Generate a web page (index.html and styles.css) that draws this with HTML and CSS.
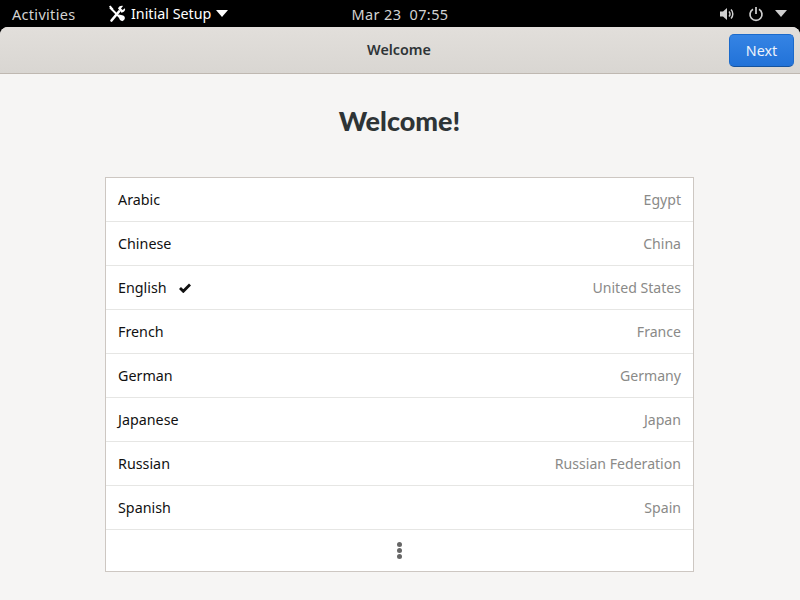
FILE: index.html
```html
<!DOCTYPE html>
<html lang="en">
<head>
<meta charset="utf-8">
<title>Welcome</title>
<link rel="stylesheet" href="styles.css">
</head>
<body>
<div class="topbar">
  <div class="topbar-left">
    <span class="activities">Activities</span>
    <span class="appmenu">
      <svg class="tools" width="18" height="18" viewBox="0 0 18 18"><path d="M2 2.500 15 15.500" fill="none" stroke="#fff" stroke-width="2"/><path d="M1 1.500 2.500.5l3 3.500L4 5.500z" fill="#fff"/><path d="M11 9.500l4.200 1a2.800 2.800 0 1 1-3.700 3.700z" fill="#fff"/><path d="M3.500 15.500 11 6.500" fill="none" stroke="#fff" stroke-width="2.600" stroke-linecap="round"/><path d="M10 3.500C11 1 13.500.5 15 1l-2 2.500 1.500 1.500L17 3.200c.5 1.800-.5 4-3.500 4.500z" fill="#fff"/></svg>
      <span>Initial Setup</span>
      <svg width="12" height="7" viewBox="0 0 12 7"><path d="M0 0h12L6 7z" fill="#fff"/></svg>
    </span>
  </div>
  <div class="clock"><span>Mar 23</span><span>07:55</span></div>
  <div class="topbar-right">
    <svg width="16" height="16" viewBox="0 0 16 16"><path d="M1 5.500h3L8 2v12L4 10.500H1z" fill="#cfcfcf"/><path d="M10 5.500a3.500 3.500 0 0 1 0 5M12 3.500a6.500 6.500 0 0 1 0 9" fill="none" stroke="#cfcfcf" stroke-width="1.500"/></svg>
    <svg class="power" width="16" height="16" viewBox="0 0 16 16"><path d="M5 3.200a6 6 0 1 0 6 0" fill="none" stroke="#cfcfcf" stroke-width="1.700"/><path d="M8 1v7" stroke="#cfcfcf" stroke-width="1.700"/></svg>
    <svg class="caret" width="12" height="7" viewBox="0 0 12 7"><path d="M0 0h12L6 7z" fill="#cfcfcf"/></svg>
  </div>
</div>
<div class="window">
  <header class="headerbar">
    <span></span>
    <h1 class="title">Welcome</h1>
    <div class="actions"><button class="next">Next</button></div>
  </header>
  <main class="content">
    <h2 class="heading">Welcome!</h2>
    <ul class="langs">
      <li class="row"><span>Arabic</span><span class="region">Egypt</span></li>
      <li class="row"><span>Chinese</span><span class="region">China</span></li>
      <li class="row"><span class="lang">English<svg class="check" width="12" height="10" viewBox="0 0 12 10"><path d="M1 5 4.300 8.300 11 1.500" fill="none" stroke="#111" stroke-width="2.800"/></svg></span><span class="region">United States</span></li>
      <li class="row"><span>French</span><span class="region">France</span></li>
      <li class="row"><span>German</span><span class="region">Germany</span></li>
      <li class="row"><span>Japanese</span><span class="region">Japan</span></li>
      <li class="row"><span>Russian</span><span class="region">Russian Federation</span></li>
      <li class="row"><span>Spanish</span><span class="region">Spain</span></li>
      <li class="more"><i></i><i></i><i></i></li>
    </ul>
  </main>
</div>
</body>
</html>
```
FILE: styles.css
```css
* { box-sizing: border-box; }
html, body { margin: 0; height: 100%; }
body {
  width: 800px; height: 600px; overflow: hidden; background: #000;
  display: flex; flex-direction: column;
  font-family: "Noto Sans", "Open Sans", sans-serif; font-size: 14.300px;
}
.topbar {
  height: 27px; flex: none; background: #000; color: #d3d3d3; font-size: 14.500px;
  display: grid; grid-template-columns: 1fr auto 1fr; align-items: center;
}
.topbar-left { display: flex; align-items: center; padding-left: 12px; }
.activities { width: 96px; letter-spacing: .3px; }
.appmenu { display: flex; align-items: center; gap: 5px; color: #fff; font-size: 14.300px; }
.clock { display: flex; gap: 8px; letter-spacing: .4px; }
.topbar-right { display: flex; justify-content: flex-end; align-items: center; padding-right: 13px; }
.power { margin-left: 13px; }
.caret { margin-left: 11px; }
.window {
  flex: 1; display: flex; flex-direction: column; background: #f6f5f4;
  border-radius: 8px 8px 0 0; overflow: hidden;
}
.headerbar {
  height: 47px; flex: none; display: grid; grid-template-columns: 1fr auto 1fr; align-items: center;
  background: linear-gradient(#e2dfdb, #d9d6d2); border-bottom: 1px solid #bfb8b1; padding: 0 6px 2px 4px;
}
.title { margin: 0; font-size: 14.300px; font-weight: 600; color: #2e3436; }
.actions { display: flex; justify-content: flex-end; margin-bottom: -2px; }
.next {
  width: 65px; height: 33px; padding: 0; font: inherit; color: #eef3fb;
  background: linear-gradient(#3584e4, #2272d8); border: 1px solid #1b6acb; border-bottom-color: #15539e; border-radius: 5px;
}
.content { flex: 1; display: flex; flex-direction: column; align-items: center; padding-right: 1px; }
.heading {
  margin: 27px 0 36px; font-family: Lato, sans-serif; font-weight: 900; font-size: 27px; line-height: 40px; color: #2e3436;
}
.langs {
  width: 589px; margin: 0; padding: 0; list-style: none; background: #fff;
  border: 1px solid #cdc7c2;
}
.row {
  height: 44px; display: flex; justify-content: space-between; align-items: center;
  padding: 0 12px; border-bottom: 1px solid #e6e6e4; color: #111;
}
.region { color: #8a8a88; font-size: 14.100px; }
.lang { display: flex; align-items: center; }
.check { margin-left: 12px; }
.more { height: 41px; display: flex; flex-direction: column; align-items: center; justify-content: center; gap: 1px; }
.more i { width: 5px; height: 5px; border-radius: 50%; background: #666; }
```
